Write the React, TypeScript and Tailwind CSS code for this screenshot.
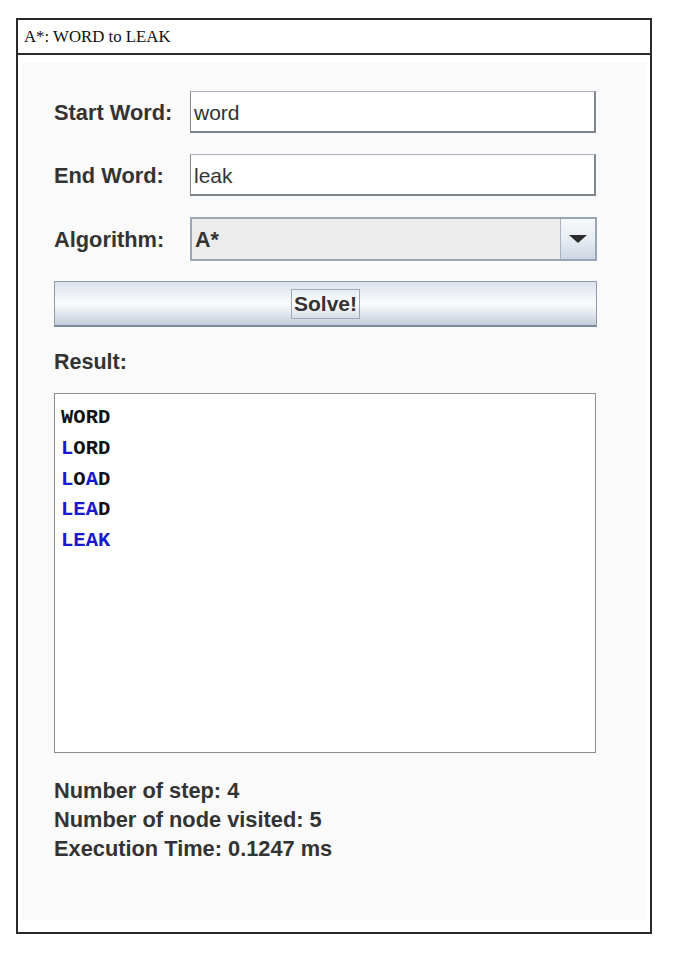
import React from "react";

const SANS = "font-['Liberation_Sans',Arial,sans-serif]";

type Step = { word: string; changed: boolean[] };

const STEPS: Step[] = [
  { word: "WORD", changed: [false, false, false, false] },
  { word: "LORD", changed: [true, false, false, false] },
  { word: "LOAD", changed: [true, false, true, false] },
  { word: "LEAD", changed: [true, true, true, false] },
  { word: "LEAK", changed: [true, true, true, true] },
];

function Field({ label, value }: { label: string; value: string }) {
  return (
    <div className="flex h-[42px] items-center">
      <span className="w-[136px] pt-[3px] text-[21.8px] font-bold text-[#333]">{label}</span>
      <div className="flex h-[42px] w-[406px] items-center border-t border-l border-r-2 border-b-2 border-t-[#a9b3bf] border-l-[#868c94] border-r-[#80868d] border-b-[#7d838a] bg-white pl-[3px] pt-[2px] text-[21px] text-[#333]">
        {value}
      </div>
    </div>
  );
}

function Combo() {
  return (
    <div className="flex h-[44px] items-center">
      <span className="w-[136px] pt-[3px] text-[21.8px] font-bold text-[#333]">Algorithm:</span>
      <div className="flex h-[44px] w-[407px] border-2 border-[#98a6b8] bg-[#ececec]">
        <div className="flex flex-1 items-center pl-[3px] pt-[2px] text-[21.5px] font-bold text-[#333]">A*</div>
        <div className="flex w-[35px] items-center justify-center border-l border-[#a8b4c3] bg-gradient-to-b from-[#f7f9fb] via-[#e8edf3] to-[#cdd6e2]">
          <svg width="20" height="10" viewBox="0 0 20 10">
            <path d="M1 1 L19 1 L10 9 Z" fill="#2b2b2b" />
          </svg>
        </div>
      </div>
    </div>
  );
}

export default function App() {
  return (
    <div className={`min-h-[958px] bg-white pt-[18px] pl-[16px] ${SANS}`}>
      <div className="w-[636px] border-2 border-[#2a2a2a]">
        <div className="flex h-[35px] items-center border-b-2 border-[#2a2a2a] pl-[6px] font-['Liberation_Serif','Times_New_Roman',serif] text-[16.8px] text-[#111]">
          A*: WORD to LEAK
        </div>
        <div className="px-[4px] pt-[7px] pb-[12px]">
          <div className="flex h-[858px] flex-col bg-[#fafafa] pl-[32px] pt-[29px]">
            <Field label="Start Word:" value="word" />
            <div className="mt-[21px]">
              <Field label="End Word:" value="leak" />
            </div>
            <div className="mt-[21px]">
              <Combo />
            </div>
            <div className="mt-[20px] flex h-[46px] w-[543px] items-center justify-center border border-b-2 border-[#8e99a9] border-b-[#7f8897] bg-gradient-to-b from-[#dbe2ec] via-[#fbfcfd] to-[#c5cfdc]">
              <span className="border border-[#9ea8b6] px-[2px] py-[1px] text-[21px] font-bold leading-[26px] text-[#333]">
                Solve!
              </span>
            </div>
            <div className="mt-[23px] h-[24px] text-[21.5px] font-bold leading-[24px] text-[#333]">Result:</div>
            <div className="mt-[19px] h-[360px] w-[542px] border border-[#8d8d8d] bg-white pl-[6px] pt-[9px] font-['Liberation_Mono','Courier_New',monospace] text-[20.5px] font-bold leading-[30.8px]">
              {STEPS.map((s) => (
                <div key={s.word}>
                  {s.word.split("").map((ch, i) => (
                    <span key={i} className={s.changed[i] ? "text-[#1a1acc]" : "text-[#111]"}>
                      {ch}
                    </span>
                  ))}
                </div>
              ))}
            </div>
            <div className="mt-[23px] text-[21.8px] font-bold leading-[29px] text-[#333]">
              <div>Number of step: 4</div>
              <div>Number of node visited: 5</div>
              <div>Execution Time: 0.1247 ms</div>
            </div>
          </div>
        </div>
      </div>
    </div>
  );
}
